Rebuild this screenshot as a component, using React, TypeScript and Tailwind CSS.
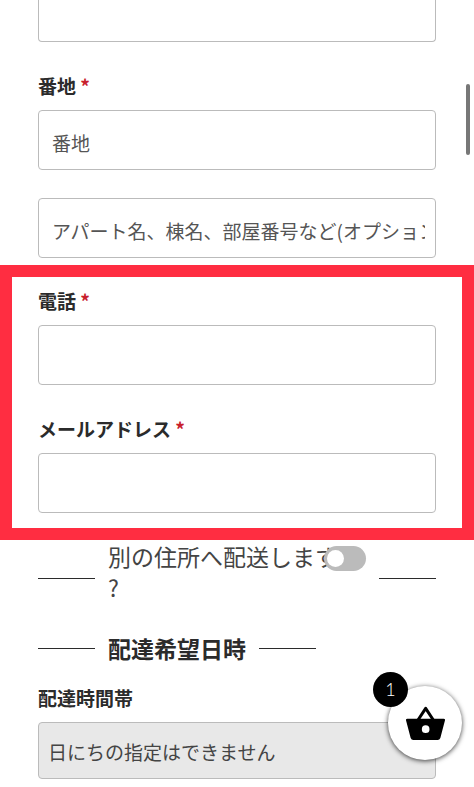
import React, { useState } from "react";

const labelClass = "block mb-3 text-[19px] leading-6 font-bold text-[#2b2b2b]";
const inputClass =
  "block w-full h-[60px] pl-[13px] pr-[10px] pt-1 border border-[#bbb] rounded-sm bg-white text-[19px] text-[#444] placeholder:text-[#555] outline-none";

type FieldProps = {
  id: string;
  label: string;
  type?: string;
  placeholder?: string;
};

function Field({ id, label, type = "text", placeholder }: FieldProps) {
  return (
    <div>
      <label htmlFor={id} className={labelClass}>
        {label} <span className="text-[#c8202c]">*</span>
      </label>
      <input id={id} type={type} placeholder={placeholder} required className={inputClass} />
    </div>
  );
}

function Line() {
  return <span className="w-[57px] h-px shrink-0 bg-[#2b2b2b]" />;
}

function CartButton() {
  return (
    <button
      type="button"
      aria-label="カート"
      className="fixed right-3 bottom-[27px] w-[74px] h-[74px] flex items-center justify-center rounded-full bg-white shadow-[0_1px_5px_rgba(0,0,0,0.75)]"
    >
      <svg width="39" height="34" viewBox="0 0 117 102" fill="none">
        <path d="M36 42L59 7L82 42" stroke="#000" strokeWidth="9" strokeLinejoin="round" />
        <path
          fillRule="evenodd"
          clipRule="evenodd"
          d="M4 38H113Q118 38 117 43L103 96Q101 102 95 102H22Q16 102 14 96L0 43Q-1 38 4 38ZM59 58A11.500 11.500 0 1 0 59 81A11.500 11.500 0 1 0 59 58Z"
          fill="#000"
        />
      </svg>
      <span className="absolute -top-[14px] -left-[15px] w-[35px] h-[35px] flex items-center justify-center rounded-full bg-black text-white text-[18px] font-light font-['Lato',sans-serif]">
        1
      </span>
    </button>
  );
}

function App() {
  const [shipOther, setShipOther] = useState(false);

  return (
    <div className="relative h-screen overflow-hidden bg-white font-['Noto_Sans_CJK_JP',sans-serif] text-[#2b2b2b]">
      <form>
        <div className="px-[38px]">
          <input
            type="text"
            aria-label="市区町村"
            className="block w-full h-[42px] px-[13px] border border-t-0 border-[#bbb] rounded-b-sm outline-none"
          />
          <div className="mt-8">
            <Field id="address1" label="番地" placeholder="番地" />
          </div>
          <input
            type="text"
            aria-label="アパート名"
            placeholder="アパート名、棟名、部屋番号など(オプション)"
            className={`${inputClass} mt-7`}
          />
        </div>

        <div className="mt-[7px] px-[26px] pt-3 pb-[15px] flex flex-col gap-8 border-12 border-[#ff2d41]">
          <Field id="phone" label="電話" type="tel" />
          <Field id="email" label="メールアドレス" type="email" />
        </div>

        <div className="px-[38px]">
          <div className="mt-px flex items-center gap-[13px]">
            <Line />
            <div className="relative flex-1 pb-3">
              <label htmlFor="ship-other" className="block text-[23px] leading-[31px] text-[#444]">
                別の住所へ配送します
                <br />?
              </label>
              <input
                id="ship-other"
                type="checkbox"
                role="switch"
                checked={shipOther}
                onChange={(e) => setShipOther(e.target.checked)}
                className="absolute top-[5px] right-0 w-[42px] h-[25px] appearance-none rounded-full bg-[#bbb] checked:bg-[#444] before:absolute before:top-1 before:left-[3px] before:w-[17px] before:h-[17px] before:rounded-full before:bg-white checked:before:left-[22px]"
              />
            </div>
            <Line />
          </div>

          <div className="mt-[18px] flex items-center gap-[13px]">
            <Line />
            <h3 className="text-[23px] leading-[31px] font-bold">配達希望日時</h3>
            <Line />
          </div>

          <div className="mt-[22px]">
            <label htmlFor="delivery-time" className={labelClass}>
              配達時間帯
            </label>
            <select
              id="delivery-time"
              className="block w-full h-[57px] px-[9px] pt-[3px] appearance-none border border-[#bbb] rounded-sm bg-[#e8e8e8] text-[19px] text-[#444]"
            >
              <option>日にちの指定はできません</option>
            </select>
          </div>
        </div>
      </form>

      {/* scroll indicator */}
      <div className="absolute top-[84px] right-1 w-1 h-[71px] rounded-full bg-[#777]" />
      <CartButton />
    </div>
  );
}

export default App;
